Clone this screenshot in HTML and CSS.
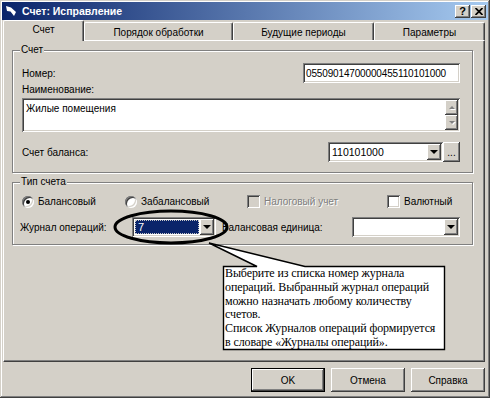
FILE: index.html
```html
<!DOCTYPE html>
<html lang="ru">

<head>
  <meta charset="UTF-8">
  <meta name="viewport" content="width=device-width, initial-scale=1.0">
  <title>Счет: Исправление</title>
  <link rel="stylesheet" href="styles.css">
</head>

<body>
  <div class="window">
    <div class="titlebar">
      <svg class="app-icon" width="12" height="12" viewBox="0 0 12 12">
        <path d="M1 1 L6 2.5 L11 7 L9 11 L5.5 6.5 L2 6 Z" fill="#fff" />
      </svg>
      <span class="title">Счет: Исправление</span>
      <div class="caption-btns">
        <div class="cap-btn">?</div>
        <div class="cap-btn">
          <svg width="8" height="7" viewBox="0 0 8 7">
            <path d="M0.5 0 L7.5 7 M7.5 0 L0.5 7" stroke="#000" stroke-width="1.7" />
          </svg>
        </div>
      </div>
    </div>

    <div class="tabs">
      <div class="tab tab-account active">Счет</div>
      <div class="tab tab-order">Порядок обработки</div>
      <div class="tab tab-future">Будущие периоды</div>
      <div class="tab tab-params">Параметры</div>
    </div>

    <div class="panel">
      <!-- Счет -->
      <fieldset class="group group-account">
        <legend>Счет</legend>
        <div class="row row-number">
          <span>Номер:</span>
          <div class="field field-number">05509014700000455110101000</div>
        </div>
        <div class="label-name">Наименование:</div>
        <div class="memo">
          <div class="memo-text">Жилые помещения</div>
          <div class="vscroll">
            <div class="sb-btn"><span class="arrow-up"></span></div>
            <div class="sb-btn"><span class="arrow-down"></span></div>
          </div>
        </div>
        <div class="row row-balance">
          <span>Счет баланса:</span>
          <div class="combo-pick">
            <div class="combo combo-balance">
              <div class="combo-text">110101000</div>
              <div class="combo-btn"><span class="arrow-down dark"></span></div>
            </div>
            <div class="btn-dots">...</div>
          </div>
        </div>
      </fieldset>

      <!-- Тип счета -->
      <fieldset class="group group-type">
        <legend>Тип счета</legend>
        <div class="row row-options">
          <div class="option opt-1"><span class="radio checked"></span>Балансовый</div>
          <div class="option opt-2"><span class="radio"></span>Забалансовый</div>
          <div class="option opt-3 disabled"><span class="check"></span>Налоговый учет</div>
          <div class="option opt-4"><span class="check"></span>Валютный</div>
        </div>
        <div class="row row-journal">
          <span class="label-journal">Журнал операций:</span>
          <div class="combo combo-journal">
            <div class="combo-text"><span class="selected">7</span></div>
            <div class="combo-btn"><span class="arrow-down dark"></span></div>
          </div>
          <span class="label-unit">Балансовая единица:</span>
          <div class="combo combo-unit">
            <div class="combo-text"></div>
            <div class="combo-btn"><span class="arrow-down dark"></span></div>
          </div>
        </div>
      </fieldset>
    </div>

    <div class="footer">
      <div class="btn default">OK</div>
      <div class="btn">Отмена</div>
      <div class="btn">Справка</div>
    </div>

    <!-- пометки поверх окна -->
    <svg class="annot" width="490" height="398" viewBox="0 0 490 398">
      <ellipse cx="171" cy="227" rx="56" ry="16" fill="none" stroke="#000" stroke-width="3" />
      <path d="M223.5 266.5 H257 L209 243 L305 266.5 H444.5 V349.5 H223.5 Z" fill="#fff" stroke="#000" stroke-width="1.4" />
    </svg>
    <div class="callout">
      Выберите из списка номер журнала<br>
      операций. Выбранный журнал операций<br>
      можно назначать любому количеству<br>
      счетов.<br>
      Список Журналов операций формируется<br>
      в словаре «Журналы операций».
    </div>
  </div>
</body>

</html>
```

FILE: styles.css
```css
body {
  margin: 0;
  font-family: 'Liberation Sans', 'DejaVu Sans', sans-serif;
  font-size: 10px;
  color: #000;
  background: #d4d0c8;
}

/* окно */
.window {
  position: relative;
  width: 490px;
  height: 398px;
  box-sizing: border-box;
  padding: 2px;
  background: #d4d0c8;
  box-shadow: inset -1px -1px #404040, inset 1px 1px #d4d0c8, inset -2px -2px #808080, inset 2px 2px #fff;
  display: flex;
  flex-direction: column;
}

/* заголовок */
.titlebar {
  height: 18px;
  display: flex;
  align-items: center;
  background: linear-gradient(90deg, #0a246a, #a6caf0);
  padding-left: 3px;
}

.app-icon {
  margin-right: 5px;
}

.title {
  color: #fff;
  font-weight: bold;
  font-size: 10.5px;
}

.caption-btns {
  margin-left: auto;
  margin-right: 2px;
  display: flex;
  gap: 1px;
}

.cap-btn {
  width: 15px;
  height: 13px;
  box-sizing: border-box;
  display: flex;
  align-items: center;
  justify-content: center;
  background: #d4d0c8;
  box-shadow: inset -1px -1px #404040, inset 1px 1px #fff, inset -2px -2px #808080;
  font-weight: bold;
  font-size: 11px;
}

/* вкладки */
.tabs {
  height: 20px;
  display: flex;
  align-items: flex-end;
  padding-left: 1px;
}

.tab {
  height: 18px;
  box-sizing: border-box;
  display: flex;
  align-items: center;
  justify-content: center;
  border-top: 1px solid #fff;
  border-left: 1px solid #fff;
  border-right: 1px solid #404040;
  box-shadow: inset -1px 0 #808080;
  border-radius: 2px 2px 0 0;
  padding-top: 1px;
}

.tab.active {
  position: relative;
  z-index: 1;
  height: 21px;
  margin-bottom: -1px;
  background: #d4d0c8;
  padding-top: 0;
  padding-bottom: 3px;
}

.tab-account { width: 81px; }
.tab-order { width: 149px; }
.tab-future { width: 141px; }
.tab-params { width: 111px; }

/* панель */
.panel {
  height: 322px;
  box-sizing: border-box;
  margin: 0 3px 0 1px;
  border-top: 1px solid #fff;
  border-left: 1px solid #fff;
  border-right: 1px solid #404040;
  border-bottom: 1px solid #404040;
  box-shadow: inset -1px -1px #808080;
  padding: 3px 11px 0 8px;
}

.group {
  margin: 0;
  min-width: 0;
  border: 1px solid #808080;
  box-shadow: inset 1px 1px #fff, 1px 1px #fff;
  padding: 0 12px 10px 9px;
}

.group legend {
  padding: 0 1px;
  margin-left: -2px;
  line-height: 12px;
  background: #d4d0c8;
}

.group-type {
  margin-top: 3px;
  padding-bottom: 7px;
}

.row {
  display: flex;
  align-items: center;
}

.row-number {
  margin-top: 7px;
  justify-content: space-between;
}

.row-balance {
  margin-top: 10px;
  justify-content: space-between;
}

.label-name {
  margin-top: 1px;
  line-height: 12px;
}

/* поля ввода */
.field,
.combo,
.memo {
  background: #fff;
  box-sizing: border-box;
  box-shadow: inset 1px 1px #808080, inset -1px -1px #fff, inset 2px 2px #404040, inset -2px -2px #d4d0c8;
}

.field {
  height: 20px;
  padding: 0 3px;
  display: flex;
  align-items: center;
}

.field-number {
  width: 157px;
  letter-spacing: -0.15px;
}

.memo {
  margin-top: 2px;
  height: 34px;
  display: flex;
  padding: 2px;
}

.memo-text {
  flex: 1;
  padding: 3px 2px;
}

.vscroll {
  width: 13px;
  display: flex;
  flex-direction: column;
}

.sb-btn {
  flex: 1;
  display: flex;
  align-items: center;
  justify-content: center;
  background: #d4d0c8;
  box-shadow: inset -1px -1px #404040, inset 1px 1px #fff, inset -2px -2px #808080;
}

.arrow-up,
.arrow-down {
  width: 0;
  height: 0;
  border-left: 3px solid transparent;
  border-right: 3px solid transparent;
}

.arrow-up {
  border-bottom: 3px solid #808080;
  filter: drop-shadow(1px 1px 0 #fff);
}

.arrow-down {
  border-top: 3px solid #808080;
  filter: drop-shadow(1px 1px 0 #fff);
}

.arrow-down.dark {
  border-left-width: 4px;
  border-right-width: 4px;
  border-top: 4px solid #000;
  filter: none;
}

/* комбобоксы */
.combo {
  height: 20px;
  display: flex;
  padding: 2px;
}

.combo-text {
  flex: 1;
  display: flex;
  align-items: center;
  padding-left: 2px;
}

.combo-balance .combo-text {
  font-size: 10.5px;
}

.combo-btn {
  width: 14px;
  display: flex;
  align-items: center;
  justify-content: center;
  background: #d4d0c8;
  box-shadow: inset -1px -1px #404040, inset 1px 1px #fff, inset -2px -2px #808080;
}

.combo-pick {
  display: flex;
}

.combo-balance {
  width: 115px;
}

.btn-dots {
  width: 17px;
  height: 20px;
  box-sizing: border-box;
  display: flex;
  align-items: flex-end;
  justify-content: center;
  padding-bottom: 5px;
  box-shadow: inset -1px -1px #404040, inset 1px 1px #fff, inset -2px -2px #808080;
  line-height: 8px;
}

/* переключатели */
.row-options {
  margin-top: 7px;
  height: 13px;
}

.option {
  display: flex;
  align-items: center;
  gap: 4px;
}

.opt-1 { width: 103px; }
.opt-2 { width: 122px; }
.opt-3 { width: 140px; }

.radio {
  width: 12px;
  height: 12px;
  border-radius: 50%;
  background: #fff;
  box-shadow: inset 1px 1px #808080, inset -1px -1px #fff, inset 2px 2px #404040, inset -2px -2px #d4d0c8;
  display: flex;
  align-items: center;
  justify-content: center;
}

.radio.checked::after {
  content: '';
  width: 4px;
  height: 4px;
  border-radius: 50%;
  background: #000;
}

.check {
  width: 13px;
  height: 13px;
  box-sizing: border-box;
  background: #fff;
  box-shadow: inset 1px 1px #808080, inset -1px -1px #fff, inset 2px 2px #404040, inset -2px -2px #d4d0c8;
}

.disabled {
  color: #808080;
  text-shadow: 1px 1px 0 #fff;
}

.disabled .check {
  background: #d4d0c8;
}

/* журнал */
.row-journal {
  margin-top: 9px;
}

.label-journal {
  width: 110px;
  margin-left: -2px;
  padding-right: 2px;
}

.combo-journal {
  width: 84px;
}

.combo-journal .combo-text {
  padding: 1px;
  font-size: 11px;
}

.selected {
  flex: 1;
  align-self: stretch;
  display: flex;
  align-items: center;
  padding-left: 3px;
  color: #fff;
  background: #0a246a;
  outline: 1px dotted #c8c8c8;
  outline-offset: -1px;
}

.label-unit {
  margin-left: 6px;
}

.combo-unit {
  margin-left: auto;
  width: 108px;
}

/* кнопки */
.footer {
  display: flex;
  justify-content: flex-end;
  gap: 6px;
  padding: 6px 3px 0 0;
}

.btn {
  width: 74px;
  height: 24px;
  box-sizing: border-box;
  display: flex;
  align-items: center;
  justify-content: center;
  box-shadow: inset -1px -1px #404040, inset 1px 1px #fff, inset -2px -2px #808080;
}

.btn.default {
  border: 1px solid #000;
}

/* выноска */
.annot {
  position: absolute;
  left: 0;
  top: 0;
  pointer-events: none;
}

.callout {
  position: absolute;
  left: 225px;
  top: 267px;
  width: 218px;
  white-space: nowrap;
  font-family: 'Liberation Serif', 'DejaVu Serif', serif;
  font-size: 12px;
  line-height: 13.8px;
  letter-spacing: -0.1px;
  color: #000;
}
```
